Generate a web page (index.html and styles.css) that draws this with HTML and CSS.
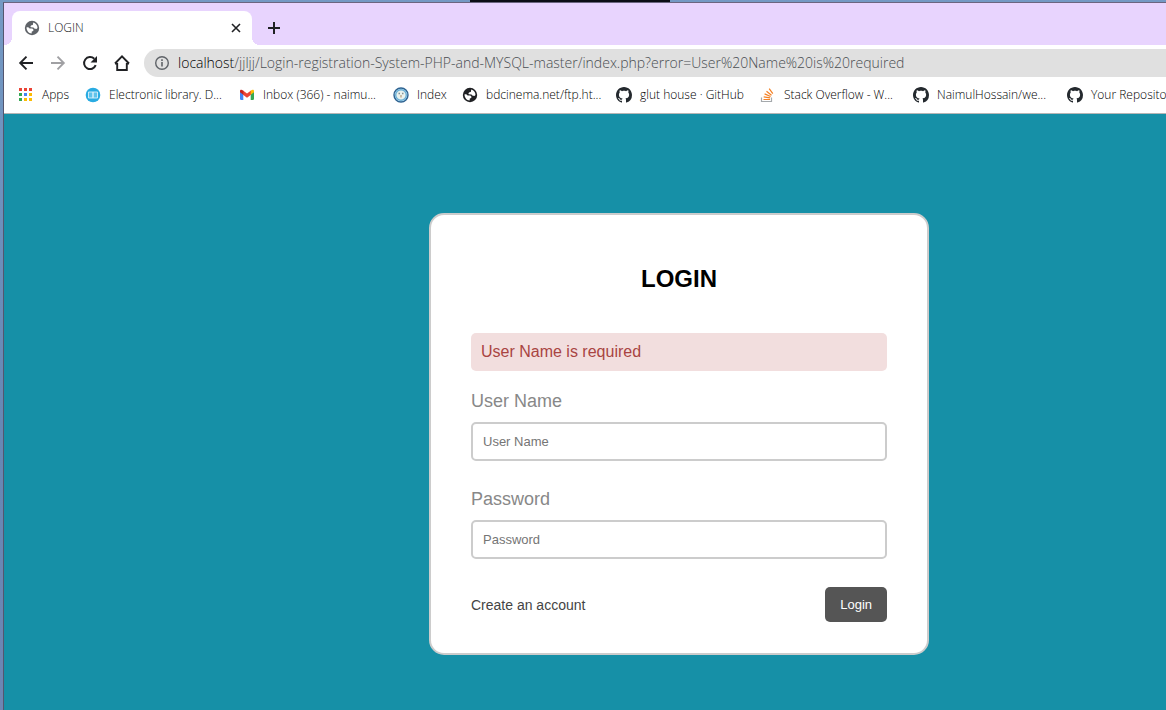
FILE: index.html
```html
<!DOCTYPE html>
<html lang="en">
<head>
<meta charset="utf-8">
<title>LOGIN</title>
<link rel="stylesheet" href="styles.css">
</head>
<body>
<svg class="sprite" aria-hidden="true">
  <symbol id="globe" viewBox="0 0 16 16">
    <circle cx="8" cy="8" r="7.200" fill="currentColor"/>
    <path d="M2.500 7.500C4 7 4.800 7.800 5.600 8.500L8.300 8.600 9.500 9.800 9.200 11 7.800 11.600 7.600 13.500C4.800 13.300 2.600 10.900 2.500 7.500z" fill="#fff"/>
    <path d="M9.200 2.600C11.800 3.200 13.500 5.300 13.500 7.900L12.400 9 10.300 8.600 9.500 7.400 6.800 7.200 6.400 6.300 7.400 5.200 8.800 5 9 4z" fill="#fff"/>
  </symbol>
  <symbol id="github" viewBox="0 0 16 16">
    <path fill="#24292e" d="M8 0C3.580 0 0 3.580 0 8c0 3.540 2.290 6.530 5.470 7.590.4.070.55-.17.55-.38 0-.19-.01-.82-.01-1.490-2.010.37-2.530-.49-2.690-.94-.09-.23-.48-.94-.82-1.130-.28-.15-.68-.52-.01-.53.63-.01 1.080.58 1.230.82.720 1.210 1.870.87 2.330.66.070-.52.280-.87.510-1.070-1.780-.2-3.640-.89-3.640-3.950 0-.87.310-1.590.820-2.150-.08-.2-.36-1.020.080-2.120 0 0 .670-.21 2.200.820.640-.18 1.320-.27 2-.27s1.360.090 2 .27c1.530-1.040 2.200-.82 2.200-.82.440 1.100.160 1.920.080 2.120.510.560.820 1.270.820 2.150 0 3.070-1.870 3.750-3.650 3.950.290.250.540.730.540 1.480 0 1.070-.01 1.930-.01 2.200 0 .21.150.46.550.38A8.010 8.010 0 0 0 16 8c0-4.420-3.580-8-8-8z"/>
  </symbol>
</svg>
<div class="desktop">
  <div class="wallpaper"><div class="wallpaper-dark"></div></div>
  <div class="browser">
    <header>
      <div class="tabstrip">
        <div class="tab">
          <svg class="icon icon-grey"><use href="#globe"/></svg>
          <span class="tab-title">LOGIN</span>
          <button class="tab-close" aria-label="Close tab"><svg viewBox="0 0 16 16"><path d="M4 4l8 8M12 4l-8 8" stroke="#202124" stroke-width="1.600"/></svg></button>
        </div>
        <button class="new-tab" aria-label="New tab"><svg viewBox="0 0 16 16"><path d="M8 2v12M2 8h12" stroke="#202124" stroke-width="2"/></svg></button>
      </div>
      <nav class="toolbar" aria-label="Browser">
        <button aria-label="Back"><svg viewBox="0 0 16 16"><path d="M15 8H2.500M8.500 1.700L2.200 8l6.300 6.300" fill="none" stroke="#202124" stroke-width="1.900"/></svg></button>
        <button aria-label="Forward"><svg viewBox="0 0 16 16"><path d="M1 8h12.500M7.500 1.700L13.800 8l-6.300 6.300" fill="none" stroke="#a0a0a3" stroke-width="1.900"/></svg></button>
        <button aria-label="Reload"><svg viewBox="0 0 16 16"><path d="M13.700 10.200A6 6 0 1 1 12.300 3.800" fill="none" stroke="#202124" stroke-width="2"/><path d="M15 1v6.500H8.500z" fill="#202124"/></svg></button>
        <button aria-label="Home"><svg viewBox="0 0 16 16"><path d="M1 8.500L8 1.400l7 7.100M3.200 8V15h9.600V8M1 8.500h2.200M12.800 8.500H15" fill="none" stroke="#202124" stroke-width="1.900"/></svg></button>
        <div class="omnibox">
          <svg class="info" viewBox="0 0 16 16"><circle cx="8" cy="8" r="6.300" fill="none" stroke="#5f6368" stroke-width="1.400"/><path d="M8 7v4.500M8 4.200v1.700" stroke="#5f6368" stroke-width="1.600"/></svg>
          <div class="url" role="textbox" contenteditable="true" spellcheck="false" aria-label="Address"><span class="host">localhost</span>/jjljj/Login-registration-System-PHP-and-MYSQL-master/index.php?error=User%20Name%20is%20required</div>
        </div>
      </nav>
      <nav class="bookmarks" aria-label="Bookmarks">
        <a href="#"><svg class="icon" viewBox="0 0 16 16"><path fill="#ea4335" d="M1 1h3v3H1zM6 1h3v3H6zM11 1h3v3h-3z"/><path fill="#34a853" d="M1 6h3v3H1zM1 11h3v3H1z"/><path fill="#4285f4" d="M6 6h3v3H6z"/><path fill="#fbbc04" d="M11 6h3v3h-3zM6 11h3v3H6zM11 11h3v3h-3z"/></svg>Apps</a>
        <a href="#"><svg class="icon" viewBox="0 0 16 16"><circle cx="8" cy="8" r="7.300" fill="#29abe2"/><path d="M3.500 5h4.500v6H3.500zM8 5h4.500v6H8z" fill="#5fc3eb" stroke="#d8f1fb" stroke-width=".9"/></svg>Electronic library. D...</a>
        <a href="#"><svg class="icon" viewBox="0 0 16 16"><path fill="#4285f4" d="M1 4.500l3.300 2V13H2.200A1.200 1.200 0 0 1 1 11.800z"/><path fill="#34a853" d="M11.700 6.500l3.300-2v7.300a1.200 1.200 0 0 1-1.200 1.200h-2.100z"/><path fill="#ea4335" d="M4 3.600l4 3 4-3v4.200l-4 3-4-3z"/><path fill="#c5221f" d="M1 4.300C1 2.600 2.700 2.400 4.300 3.800v4L1 5.300z"/><path fill="#fbbc04" d="M15 4.300c0-1.700-1.700-1.900-3.300-.5v4L15 5.300z"/></svg>Inbox (366) - naimu...</a>
        <a href="#"><svg class="icon" viewBox="0 0 16 16"><circle cx="8" cy="8" r="7" fill="#c8e5f5" stroke="#2d6291" stroke-width="1.400"/><circle cx="8" cy="8" r="5.300" fill="#e9f2ee" stroke="#69afd6" stroke-width="1.400"/><path d="M6.200 5.800v1.400M9.800 5.800v1.400" stroke="#6c7a80" stroke-width="1.200"/><path d="M8 8v2.500" stroke="#b9a68a" stroke-width="1.400"/></svg>Index</a>
        <a href="#"><svg class="icon icon-dark"><use href="#globe"/></svg>bdcinema.net/ftp.ht...</a>
        <a href="#"><svg class="icon"><use href="#github"/></svg>glut house · GitHub</a>
        <a href="#"><svg class="icon" viewBox="0 0 16 16"><path d="M1.500 10.500v4h10v-4" fill="none" stroke="#a5a9ac" stroke-width="1.200"/><path d="M3.500 12.500h6.500M3.700 9.800l6.400 1M4.600 6.900l6 2.600M6.500 4.200l5 4M9.200 1.700l3.600 5" stroke="#f48024" stroke-width="1.200"/></svg>Stack Overflow - W...</a>
        <a href="#"><svg class="icon"><use href="#github"/></svg>NaimulHossain/we...</a>
        <a href="#"><svg class="icon"><use href="#github"/></svg>Your Repositor</a>
      </nav>
    </header>
    <main>
      <form class="card">
        <h2>LOGIN</h2>
        <p class="error">User Name is required</p>
        <label for="uname">User Name</label>
        <input id="uname" type="text" placeholder="User Name">
        <label for="password">Password</label>
        <input id="password" type="password" placeholder="Password">
        <div class="actions">
          <a href="#">Create an account</a>
          <button type="button">Login</button>
        </div>
      </form>
    </main>
  </div>
</div>
</body>
</html>
```
FILE: styles.css
```css
* { box-sizing: border-box; }
body { margin: 0; overflow: hidden; font-family: "Liberation Sans", Arial, sans-serif; }
button { border: 0; background: none; padding: 0; }
a { color: inherit; text-decoration: none; }
svg { display: block; }
.sprite { display: none; }

.desktop {
  display: flex;
  flex-direction: column;
  height: 100vh;
  padding-left: 3px;
  background: linear-gradient(#7499c4, #6788b4 60%, #6d86b3);
}
.wallpaper { height: 2px; }
.wallpaper-dark { width: 200px; height: 2px; margin-left: 467px; background: #0c0d16; }
.browser {
  flex: 1;
  display: flex;
  flex-direction: column;
  min-height: 0;
  border-left: 1px solid #54566f;
  border-top: 1px solid #6b6580;
}
header { background: #fff; border-bottom: 1px solid #b5b5b5; font-family: "Open Sans", "Noto Sans", sans-serif; overflow: hidden; }
.icon { width: 16px; height: 16px; flex: none; }
.icon-grey { color: #5f6368; }
.icon-dark { color: #202124; }

.tabstrip { display: flex; height: 42px; background: #e8d4fe; padding: 8px 0 0 8px; }
.tab {
  position: relative;
  display: flex;
  align-items: center;
  width: 240px;
  padding: 0 8px 0 12px;
  border-radius: 8px 8px 0 0;
  background: #fff;
}
.tab::before, .tab::after {
  content: "";
  position: absolute;
  bottom: 0;
  width: 8px;
  height: 8px;
}
.tab::before { right: 100%; background: radial-gradient(circle at 0 0, transparent 8px, #fff 8px); }
.tab::after { left: 100%; background: radial-gradient(circle at 100% 0, transparent 8px, #fff 8px); }
.tab-title { flex: 1; margin-left: 8px; font-size: 12px; line-height: 16px; font-weight: 300; color: #202124; }
.tab-close svg { width: 16px; height: 16px; }
.new-tab { margin-left: 14px; }
.new-tab svg { width: 16px; height: 16px; }

.toolbar { display: flex; align-items: center; gap: 16px; height: 36px; padding-left: 14px; }
.toolbar button svg { width: 16px; height: 16px; }
.omnibox {
  flex: 1;
  display: flex;
  align-items: center;
  gap: 8px;
  height: 28px;
  margin-left: -2px;
  padding-left: 10px;
  border-radius: 14px 0 0 14px;
  background: #e0e0e0;
}
.info { width: 16px; height: 16px; flex: none; }
.url { font-size: 14px; line-height: 20px; font-weight: 300; color: #4a4e52; white-space: nowrap; outline: none; }
.host { color: #000; }

.bookmarks {
  display: grid;
  grid-template-columns: 67px 154px 154px 69px 154px 144px 153px 154px 154px;
  height: 32px;
  padding-left: 14px;
  padding-top: 6px;
  font-size: 12px;
  line-height: 16px;
  font-weight: 300;
  color: #000;
}
.bookmarks a { display: flex; gap: 8px; height: 16px; white-space: nowrap; }

main {
  flex: 1;
  display: flex;
  justify-content: center;
  align-items: flex-start;
  padding: 99px 0 0 188px;
  background: #1690a7;
}
.card {
  width: 500px;
  padding: 30px 40px 31px;
  border: 2px solid #ccc;
  border-radius: 15px;
  background: #fff;
}
h2 { margin: 20px 0 40px; font-size: 24px; line-height: 28px; text-align: center; color: #000; }
.error { margin: 0 0 20px; padding: 10px; border-radius: 5px; font-size: 16px; line-height: 18px; background: #f2dede; color: #a94442; }
label { display: block; margin-bottom: 11px; font-size: 18px; line-height: 20px; color: #888; }
.card input {
  display: block;
  width: 100%;
  height: 39px;
  margin: 0 0 28px;
  padding: 10px;
  border: 2px solid #ccc;
  border-radius: 5px;
  font: 13px "Liberation Sans", Arial, sans-serif;
  color: #333;
}
.card input::placeholder { color: #757575; }
.actions { display: flex; justify-content: space-between; align-items: center; }
.actions a { font-size: 14px; color: #444; }
.actions button { padding: 10px 15px; border-radius: 5px; font: 13px/15px "Liberation Sans", Arial, sans-serif; background: #555; color: #fff; }
```
